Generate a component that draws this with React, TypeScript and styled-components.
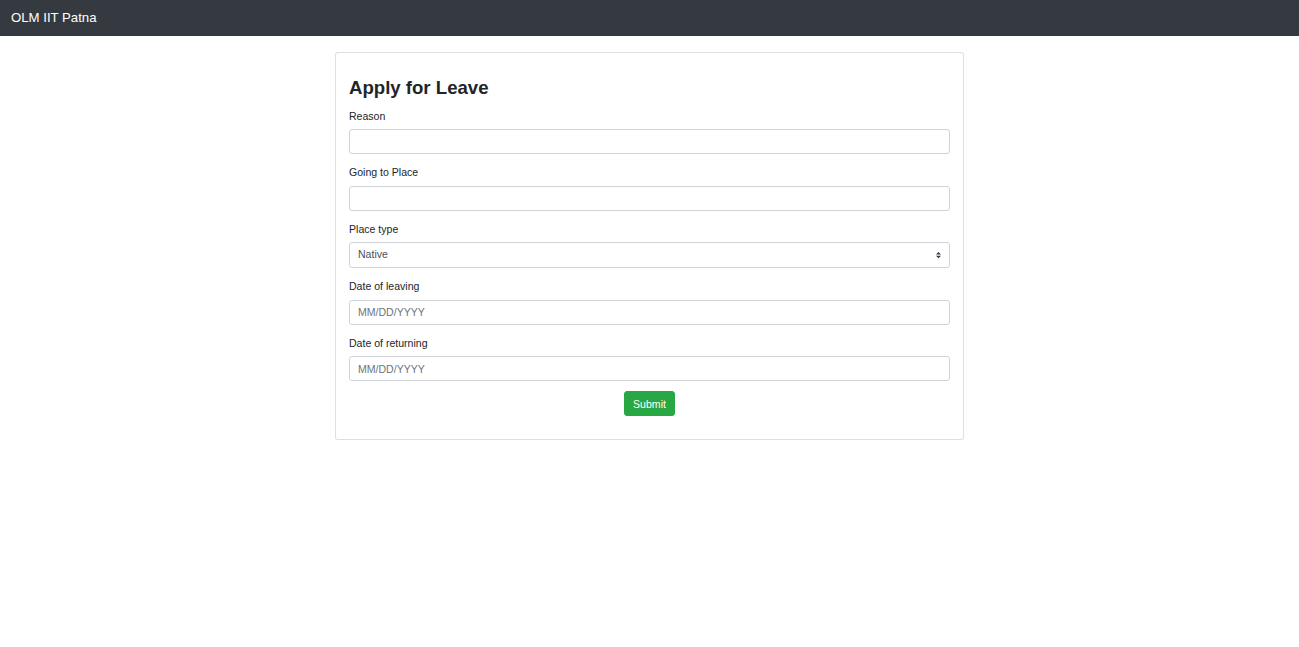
import React from "react";
import styled, { createGlobalStyle } from "styled-components";

const GlobalStyle = createGlobalStyle`
  * { box-sizing: border-box; }
  html, body { margin: 0; padding: 0; background: #fff; }
  body {
    font-family: "Liberation Sans", Arial, sans-serif;
    font-size: 10.56px;
    line-height: 1.5;
    color: #212529;
  }
`;

const NavBar = styled.nav`
  height: 36px;
  background: #343a40;
  display: flex;
  align-items: center;
  padding: 0 11px;
`;

const Brand = styled.a`
  color: #fff;
  font-size: 13.2px;
  line-height: 20px;
  text-decoration: none;
`;

const Main = styled.main`
  display: flex;
  justify-content: center;
  padding-top: 16px;
`;

const Card = styled.div`
  width: 629px;
  border: 1px solid rgba(0, 0, 0, 0.125);
  border-radius: 3px;
  padding: 13px 13px 13px;
  background: #fff;
`;

const Title = styled.h3`
  margin: 11px 0 8.5px;
  font-size: 18.6px;
  line-height: 22px;
  font-weight: 700;
  color: #212529;
`;

const Form = styled.form`
  display: flex;
  flex-direction: column;
`;

const Group = styled.div<{ $center?: boolean }>`
  margin-bottom: 10px;
  display: flex;
  flex-direction: column;
  align-items: ${(p) => (p.$center ? "center" : "stretch")};
`;

const Label = styled.label`
  display: block;
  font-size: 10.56px;
  line-height: 16px;
  margin-bottom: 5.5px;
  color: #212529;
`;

const Input = styled.input`
  display: block;
  width: 100%;
  height: 25px;
  padding: 4px 8px;
  font-family: inherit;
  font-size: 10.56px;
  line-height: 1.5;
  color: #495057;
  background: #fff;
  border: 1px solid #ced4da;
  border-radius: 3px;
  outline: none;
  &::placeholder { color: #6c757d; opacity: 1; }
`;

const SelectWrap = styled.div`
  position: relative;
  width: 100%;
`;

const Select = styled.select`
  display: block;
  width: 100%;
  height: 26px;
  padding: 4px 20px 4px 8px;
  font-family: inherit;
  font-size: 10.56px;
  line-height: 1.5;
  color: #495057;
  background: #fff;
  border: 1px solid #ced4da;
  border-radius: 3px;
  appearance: none;
  -webkit-appearance: none;
  outline: none;
`;

const Arrows = styled.svg`
  position: absolute;
  right: 9px;
  top: 50%;
  transform: translateY(-50%);
  width: 5px;
  height: 7px;
  pointer-events: none;
`;

const SubmitButton = styled.button`
  font-family: inherit;
  font-size: 10.56px;
  line-height: 16px;
  padding: 4px 8px;
  height: 24.5px;
  color: #fff;
  background: #28a745;
  border: 1px solid #28a745;
  border-radius: 3px;
  cursor: pointer;
`;

export default function App() {
  return (
    <>
      <GlobalStyle />
      <NavBar>
        <Brand href="#">OLM IIT Patna</Brand>
      </NavBar>
      <Main>
        <Card>
          <Title>Apply for Leave</Title>
          <Form onSubmit={(e) => e.preventDefault()}>
            <Group>
              <Label>Reason</Label>
              <Input type="text" />
            </Group>
            <Group>
              <Label>Going to Place</Label>
              <Input type="text" />
            </Group>
            <Group>
              <Label>Place type</Label>
              <SelectWrap>
                <Select defaultValue="Native">
                  <option>Native</option>
                  <option>Other</option>
                </Select>
                <Arrows viewBox="0 0 4 5">
                  <path fill="#343a40" d="M2 0L0 2h4zm0 5L0 3h4z" />
                </Arrows>
              </SelectWrap>
            </Group>
            <Group>
              <Label>Date of leaving</Label>
              <Input type="text" placeholder="MM/DD/YYYY" />
            </Group>
            <Group>
              <Label>Date of returning</Label>
              <Input type="text" placeholder="MM/DD/YYYY" />
            </Group>
            <Group $center>
              <SubmitButton type="submit">Submit</SubmitButton>
            </Group>
          </Form>
        </Card>
      </Main>
    </>
  );
}
